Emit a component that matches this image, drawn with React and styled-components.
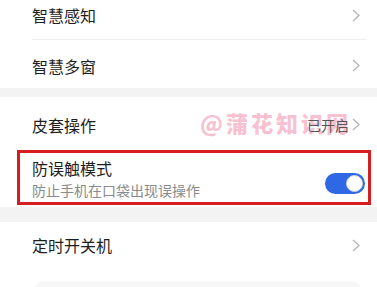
import React from "react";
import styled, { createGlobalStyle } from "styled-components";

const GlobalStyle = createGlobalStyle`
  html, body { margin: 0; padding: 0; background: #fff; }
  body {
    font-family: "Noto Sans CJK SC", "Noto Sans", sans-serif;
    overflow: hidden;
  }
`;

const Page = styled.div`
  width: 377px;
  height: 287px;
  overflow: hidden;
  position: relative;
`;

const Shift = styled.div`
  margin-top: -9px;
`;

const Group = styled.section`
  background: #fff;
`;

const Band = styled.div`
  height: ${(p) => p.$h}px;
  background: #f3f3f3;
`;

const Row = styled.div`
  position: relative;
  display: flex;
  align-items: center;
  justify-content: space-between;
  height: ${(p) => p.$h}px;
  padding: ${(p) => p.$pt || 0}px ${(p) => p.$pr || 17}px 0 32px;
  box-sizing: border-box;
`;

const Title = styled.span`
  font-size: 16px;
  line-height: 22px;
  color: #1e1e1e;
`;

const Stack = styled.div`
  display: flex;
  flex-direction: column;
`;

const Sub = styled.span`
  font-size: 14px;
  line-height: 20px;
  color: #8a8a8a;
  margin-top: 1px;
`;

const Divider = styled.div`
  height: 1px;
  background: #f0f0f0;
  margin: 0 10px 0 32px;
`;

const Right = styled.div`
  display: flex;
  align-items: center;
  gap: 3px;
  position: relative;
  z-index: 2;
`;

const Value = styled.span`
  font-size: 14px;
  line-height: 20px;
  color: #555;
`;

const Watermark = styled.span`
  position: absolute;
  left: 200px;
  top: 11px;
  font-size: 22px;
  line-height: 28px;
  font-weight: 900;
  letter-spacing: 3px;
  color: rgba(238, 115, 150, 0.45);
  white-space: nowrap;
  z-index: 1;
`;

const Annot = styled.div`
  position: absolute;
  left: 17px;
  right: 6px;
  top: 0;
  bottom: 2px;
  border: 3px solid #d71d20;
  pointer-events: none;
`;

const Toggle = styled.div`
  width: 40px;
  height: 21px;
  border-radius: 11px;
  background: #2f68e4;
  position: relative;
  margin-top: 9px;
`;

const Knob = styled.div`
  position: absolute;
  right: 2px;
  top: 2px;
  width: 17px;
  height: 17px;
  box-sizing: border-box;
  border-radius: 50%;
  background: #fff;
  border: 1px solid #c8cfdc;
`;

const Footer = styled.div`
  margin: 15px 17px 0 35px;
  height: 20px;
  border-radius: 8px 8px 0 0;
  background: #f7f7f7;
  box-shadow: 0 -1px 3px rgba(0, 0, 0, 0.06);
`;

const Chevron = () => (
  <svg width="8" height="13" viewBox="0 0 8 13" fill="none">
    <polyline points="1,1 7,6.5 1,12" stroke="#b5b5b5" strokeWidth="1.3" fill="none" />
  </svg>
);

export default function App() {
  return (
    <Page>
      <GlobalStyle />
      <Shift>
        <Group>
          <Row $h={48}>
            <Title>智慧感知</Title>
            <Chevron />
          </Row>
          <Divider />
          <Row $h={48} $pt={3}>
            <Title>智慧多窗</Title>
            <Chevron />
          </Row>
        </Group>
        <Band $h={9} />
        <Group>
          <Row $h={53} $pt={2}>
            <Watermark>@蒲花知识网</Watermark>
            <Title>皮套操作</Title>
            <Right>
              <Value>已开启</Value>
              <Chevron />
            </Right>
          </Row>
          <Row $h={57} $pr={12}>
            <Stack>
              <Title>防误触模式</Title>
              <Sub>防止手机在口袋出现误操作</Sub>
            </Stack>
            <Toggle>
              <Knob />
            </Toggle>
            <Annot />
          </Row>
        </Group>
        <Band $h={15} />
        <Group>
          <Row $h={46}>
            <Title>定时开关机</Title>
            <Chevron />
          </Row>
        </Group>
        <Footer />
      </Shift>
    </Page>
  );
}
